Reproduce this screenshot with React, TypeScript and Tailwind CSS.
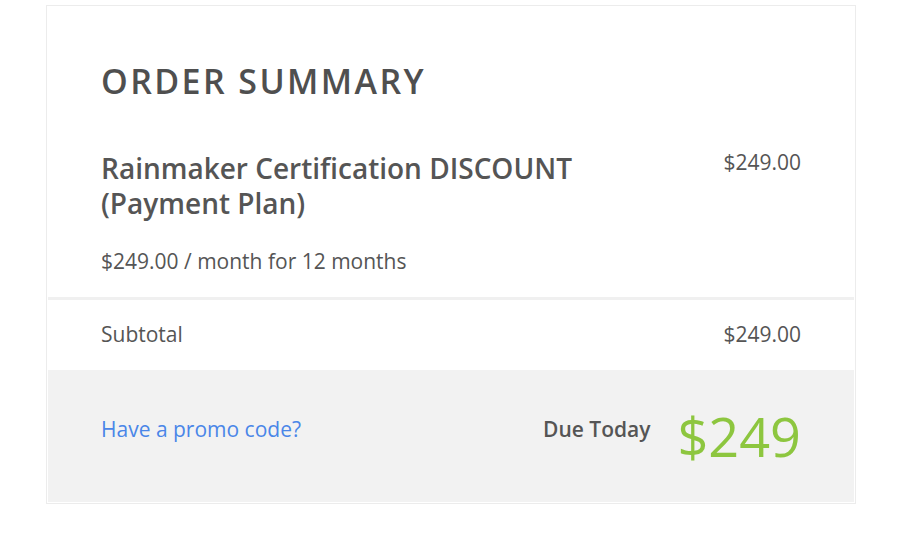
export default function App() {
  return (
    <div className="min-h-screen bg-white pl-[46px] pt-[5px] text-[#555]" style={{ fontFamily: '"Open Sans", sans-serif' }}>
      <div className="w-[810px] border border-[#ececec] bg-white p-px">
        {/* Header + line item */}
        <section className="px-[53px] pt-[54px] pb-[22px]">
          <h1 className="text-[34px] font-semibold leading-[40px] tracking-[2.4px] text-[#4f4f4f]">ORDER SUMMARY</h1>
          <div className="mt-[50px] flex items-start justify-between">
            <h2 className="w-[520px] text-[28px] font-semibold leading-[35px] text-[#555]">
              Rainmaker Certification DISCOUNT (Payment Plan)
            </h2>
            <span className="mt-[-3px] text-[21px] leading-[28px]">$249.00</span>
          </div>
          <p className="mt-[26px] text-[21px] leading-[28px]">$249.00 / month for 12 months</p>
        </section>

        <div className="h-[3px] bg-[#f0f0f0]" />

        {/* Subtotal */}
        <div className="flex h-[70px] items-center justify-between px-[53px] text-[21px]">
          <span>Subtotal</span>
          <span>$249.00</span>
        </div>

        {/* Due today */}
        <div className="flex h-[132px] items-center justify-between bg-[#f2f2f2] px-[53px]">
          <a href="#" className="mb-[13px] text-[21px] text-[#4a86e8]">Have a promo code?</a>
          <div className="flex items-center gap-[27px]">
            <span className="mb-[13px] text-[21px] font-semibold text-[#555]">Due Today</span>
            <span className="text-[54px] font-medium leading-none text-[#8dc63f]">$249</span>
          </div>
        </div>
      </div>
    </div>
  );
}
